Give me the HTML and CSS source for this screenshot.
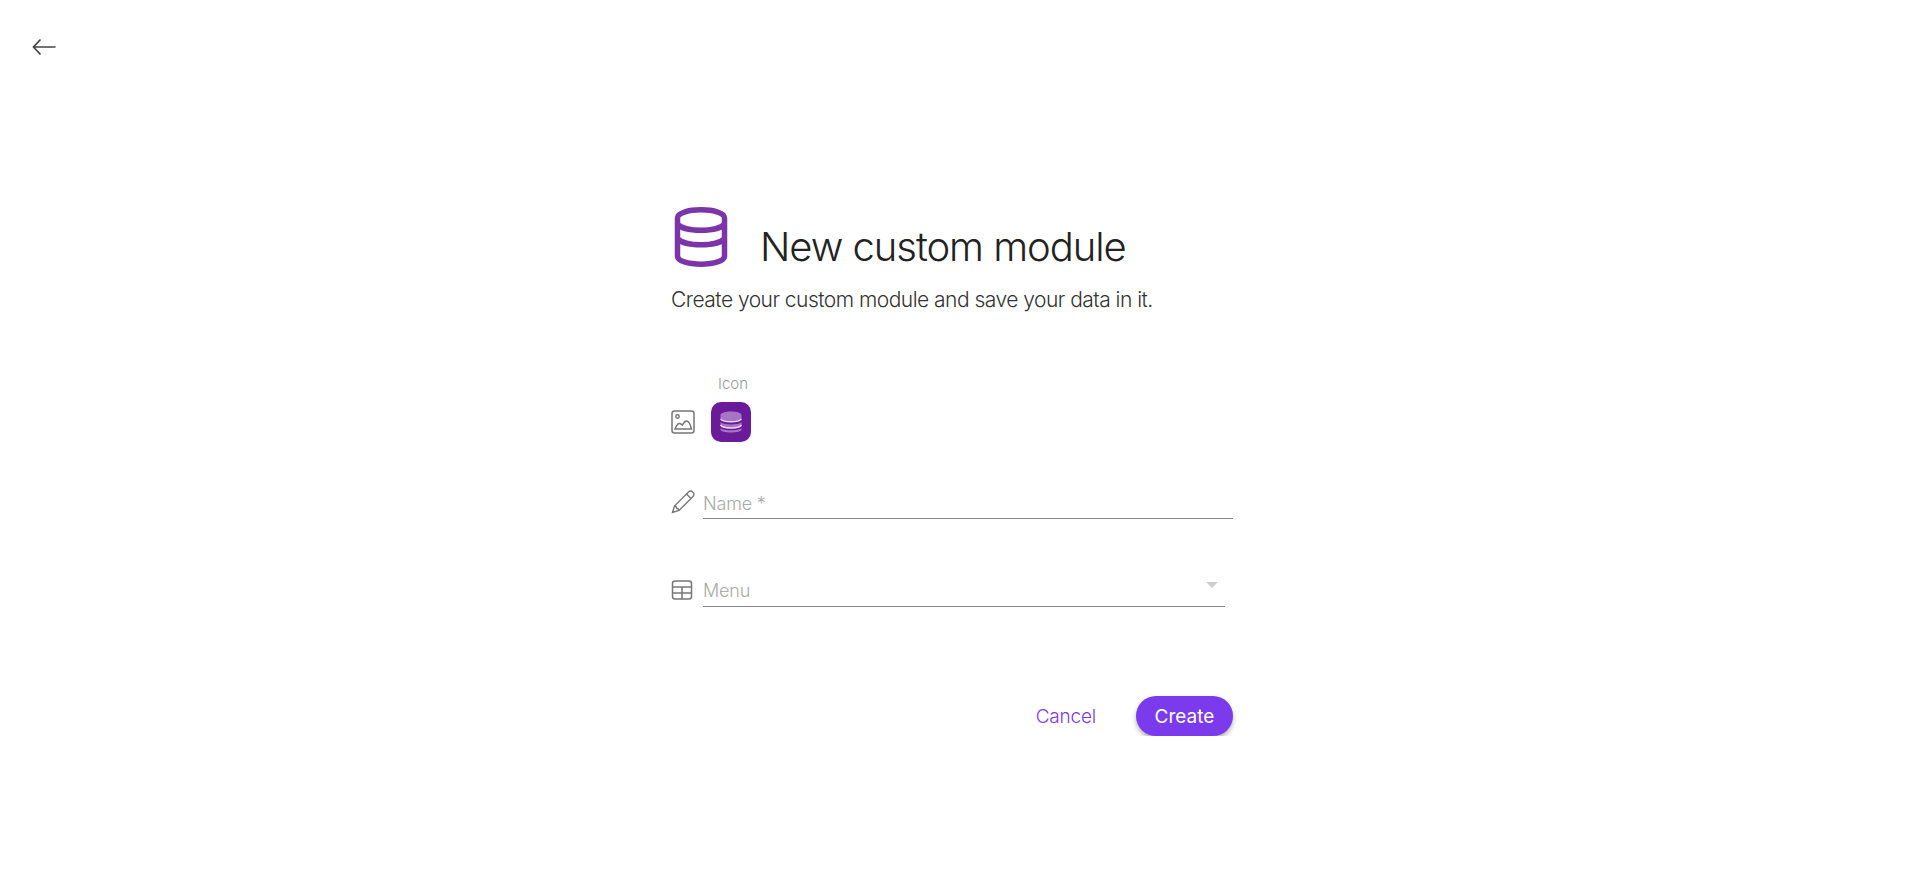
FILE: index.html
```html
<!DOCTYPE html>
<html lang="en">
<head>
  <meta charset="UTF-8" />
  <title>New custom module</title>
  <link rel="stylesheet" href="styles.css">
</head>
<body>
  <div class="topbar">
    <button class="back-btn" aria-label="Back">
      <svg width="24" height="24" viewBox="0 0 24 24" fill="none" stroke="#444" stroke-width="1.7">
        <path d="M23.500 12H1.500M8.500 4.500 1.500 12l7 7.500"/>
      </svg>
    </button>
  </div>

  <main class="form-wrap">
    <div class="title-row">
      <svg class="title-icon" width="56" height="60" viewBox="0 0 56 60" fill="none" stroke="#7b35a8" stroke-width="5.5">
        <path d="M4.500 11C4.500 6 15 2.800 28 2.800S51.500 6 51.500 11v38c0 5-10.500 8.200-23.500 8.200S4.500 54 4.500 49z"/>
        <path d="M4.500 17c3 4 13 6.200 23.500 6.200S48.500 21 51.500 17M4.500 31.500c3 4 13 6.200 23.500 6.200s20.500-2.200 23.500-6.200"/>
      </svg>
      <h1>New custom module</h1>
    </div>
    <p class="subtitle">Create your custom module and save your data in it.</p>

    <div class="icon-row">
      <svg width="24" height="24" viewBox="0 0 24 24" fill="none" stroke="#777" stroke-width="1.500">
        <rect x="1" y="1" width="22" height="22" rx="2.500"/>
        <circle cx="6.500" cy="6.500" r="1.700"/>
        <path d="M4 19c1-2.500 2.500-5.500 4.500-5.500 1.300 0 2 1 3 1.500 1-2 2.500-4 4-4 2.500 0 4 4 5 8z"/>
      </svg>
      <div class="icon-field">
        <label class="icon-label">Icon</label>
        <div class="icon-tile">
          <svg width="24" height="24" viewBox="0 0 24 24">
            <path fill="#a874c4" d="M12 1.500c5.500 0 10.500 1.400 10.500 3.500v3.300c0 2-5 3.600-10.500 3.600S1.500 10.300 1.500 8.300V5C1.500 2.900 6.500 1.500 12 1.500z"/>
            <path fill="#a874c4" d="M1.500 12.200c2 1.500 6 2.200 10.500 2.200s8.500-.7 10.500-2.200v3c0 2-5 3.400-10.500 3.400S1.500 17.200 1.500 15.200z"/>
            <path fill="#a874c4" d="M1.500 18.200c2 1.400 6 2 10.500 2s8.500-.6 10.500-2v1.300c0 1.900-5 3-10.500 3s-10.500-1.100-10.500-3z"/>
            <path fill="none" stroke="#e6d6ef" stroke-width="1.400" d="M1.500 8.800c1.500 2 6 3 10.500 3s9-1 10.500-3M1.500 15c1.500 2 6 3 10.500 3s9-1 10.500-3"/>
          </svg>
        </div>
      </div>
    </div>

    <div class="field name-field">
      <svg width="24" height="24" viewBox="0 0 24 24" fill="none" stroke="#777" stroke-width="1.400">
        <path d="M1.500 22.500 3.500 16 17.500 2c1.200-1.200 2.800-1.200 3.800-.2l.9.900c1 1 1 2.600-.2 3.800L8 20.500z"/>
        <path d="M15.500 4l4.500 4.500M3.500 16c1.500 0 2 .5 2.200 2.300 1.800.2 2.300.7 2.300 2.200"/>
      </svg>
      <div class="input-line">Name *</div>
    </div>

    <div class="field menu-field">
      <svg width="22" height="22" viewBox="0 0 22 22" fill="none" stroke="#777" stroke-width="1.500">
        <rect x="1.500" y="2" width="19" height="18" rx="2.500"/>
        <path d="M1.500 8h19M1.500 14h19M11 8v12"/>
      </svg>
      <div class="input-line select-line">
        <span>Menu</span>
        <span class="caret"></span>
      </div>
    </div>

    <div class="actions">
      <button class="btn-cancel">Cancel</button>
      <button class="btn-create">Create</button>
    </div>
  </main>
</body>
</html>
```

FILE: styles.css
```css
* {
  box-sizing: border-box;
}

body {
  margin: 0;
  background: #fff;
  font-family: Inter, "Open Sans", sans-serif;
  color: #222;
}

.topbar {
  height: 207px;
  padding: 35px 0 0 32px;
}

.back-btn {
  display: block;
  padding: 0;
  border: none;
  background: none;
  height: 24px;
}

.form-wrap {
  width: 562px;
  margin-left: 671px;
}

.title-row {
  display: flex;
  align-items: flex-start;
  height: 62px;
}

.title-icon {
  flex: none;
  margin-left: 2px;
}

h1 {
  margin: 16px 0 0 31px;
  font-size: 40px;
  font-weight: 300;
  line-height: 48px;
  letter-spacing: -1.05px;
  white-space: nowrap;
}

.subtitle {
  margin: 17px 0 0;
  font-size: 21px;
  font-weight: 300;
  line-height: 28px;
  letter-spacing: -0.52px;
  color: #333;
  white-space: nowrap;
}

.icon-row {
  display: flex;
  align-items: flex-end;
  margin-top: 60px;
}

.icon-row > svg {
  margin-bottom: 8px;
}

.icon-field {
  margin-left: 16px;
}

.icon-label {
  display: block;
  margin-left: 7px;
  font-size: 15px;
  font-weight: 300;
  line-height: 20px;
  color: #999;
}

.icon-tile {
  display: flex;
  align-items: center;
  justify-content: center;
  width: 40px;
  height: 40px;
  margin-top: 8px;
  border-radius: 10px;
  background: #6a1b9a;
}

.field {
  display: flex;
  align-items: flex-end;
  gap: 9px;
}

.field > svg {
  flex: none;
}

.name-field {
  margin-top: 46px;
}

.name-field > svg {
  margin-bottom: 5px;
}

.name-field .input-line {
  margin-left: -1px;
}

.menu-field {
  margin-top: 57px;
  width: 554px;
  gap: 10px;
}

.menu-field > svg {
  margin-bottom: 6px;
}

.input-line {
  flex: 1;
  height: 31px;
  font-size: 18px;
  font-weight: 300;
  line-height: 31px;
  letter-spacing: -0.2px;
  color: #aaa;
  border-bottom: 1px solid #8a8a8a;
}

.select-line {
  display: flex;
  justify-content: space-between;
  line-height: 30px;
}

.caret {
  width: 0;
  height: 0;
  margin: 6px 7px 0 0;
  border-left: 6px solid transparent;
  border-right: 6px solid transparent;
  border-top: 6px solid #ccc;
}

.actions {
  display: flex;
  justify-content: flex-end;
  align-items: center;
  gap: 40px;
  margin-top: 89px;
}

.actions button {
  height: 40px;
  border: none;
  font-family: Inter, "Open Sans", sans-serif;
  font-size: 19px;
}

.btn-cancel {
  padding: 0;
  background: none;
  color: #7c3aed;
  font-weight: 300;
  letter-spacing: -0.2px;
}

.btn-create {
  width: 97px;
  border-radius: 20px;
  background: #7c3aed;
  color: #fff;
  box-shadow: 0 3px 5px rgba(0, 0, 0, 0.3);
}
```
